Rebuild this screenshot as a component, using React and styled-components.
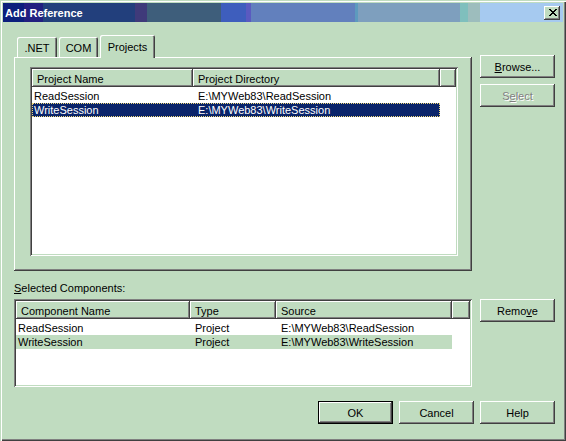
import React from "react";
import styled, { createGlobalStyle } from "styled-components";

const face = "#c0dcc0";
const raised = `inset -1px -1px #404040, inset 1px 1px #ffffff, inset -2px -2px #808080`;
const sunken = `inset 1px 1px #808080, inset -1px -1px #ffffff, inset 2px 2px #404040, inset -2px -2px ${face}`;

const GlobalStyle = createGlobalStyle`
  html, body {
    margin: 0;
    padding: 0;
    background: ${face};
  }
  body {
    font-family: "Liberation Sans", Arial, sans-serif;
    font-size: 11px;
    color: #000;
  }
`;

const projectCols = [
  { label: "Project Name", w: 161 },
  { label: "Project Directory", w: 247 },
];

const projectRows = [
  ["ReadSession", "E:\\MYWeb83\\ReadSession"],
  ["WriteSession", "E:\\MYWeb83\\WriteSession"],
];

const selectedCols = [
  { label: "Component Name", w: 174 },
  { label: "Type", w: 86 },
  { label: "Source", w: 176 },
];

const selectedRows = [
  ["ReadSession", "Project", "E:\\MYWeb83\\ReadSession"],
  ["WriteSession", "Project", "E:\\MYWeb83\\WriteSession"],
];

const CloseGlyph = () => (
  <svg width="8" height="7" viewBox="0 0 8 7" shapeRendering="crispEdges">
    <rect x="0" y="0" width="2" height="1" fill="#000" />
    <rect x="6" y="0" width="2" height="1" fill="#000" />
    <rect x="1" y="1" width="2" height="1" fill="#000" />
    <rect x="5" y="1" width="2" height="1" fill="#000" />
    <rect x="2" y="2" width="4" height="1" fill="#000" />
    <rect x="3" y="3" width="2" height="1" fill="#000" />
    <rect x="2" y="4" width="4" height="1" fill="#000" />
    <rect x="1" y="5" width="2" height="1" fill="#000" />
    <rect x="5" y="5" width="2" height="1" fill="#000" />
    <rect x="0" y="6" width="2" height="1" fill="#000" />
    <rect x="6" y="6" width="2" height="1" fill="#000" />
  </svg>
);

const ListView = ({ cols, rows, height, selected, active }) => {
  const rowWidth = cols.reduce((s, c) => s + c.w, 0);
  return (
    <List $h={height}>
      <Header>
        {cols.map((c) => (
          <HeaderCell key={c.label} $w={c.w}>
            {c.label}
          </HeaderCell>
        ))}
        <HeaderFiller />
      </Header>
      <Rows>
        {rows.map((r, i) => (
          <Row
            key={i}
            $w={rowWidth}
            $selected={i === selected}
            $active={active}
          >
            {r.map((v, j) => (
              <Cell key={j} $w={cols[j].w} $first={j === 0}>
                {v}
              </Cell>
            ))}
          </Row>
        ))}
      </Rows>
    </List>
  );
};

const App = () => {
  return (
    <>
      <GlobalStyle />
      <Window>
        <TitleBar>
          <Title>Add Reference</Title>
          <CloseButton>
            <CloseGlyph />
          </CloseButton>
        </TitleBar>

        <Body>
          <TopRow>
            <LeftCol>
              <TabStrip>
                <Tab $w={40}>.NET</Tab>
                <Tab $w={39}>COM</Tab>
                <Tab $w={55} $active>
                  Projects
                </Tab>
              </TabStrip>
              <Panel>
                <ListView
                  cols={projectCols}
                  rows={projectRows}
                  height={189}
                  selected={1}
                  active
                />
              </Panel>
            </LeftCol>
            <SideCol $top={20}>
              <Button>
                <u>B</u>rowse...
              </Button>
              <Button disabled>
                S<u>e</u>lect
              </Button>
            </SideCol>
          </TopRow>

          <Label>
            <u>S</u>elected Components:
          </Label>

          <TopRow>
            <LeftCol>
              <ListView
                cols={selectedCols}
                rows={selectedRows}
                height={88}
                selected={1}
              />
            </LeftCol>
            <SideCol $top={0}>
              <Button>
                Remo<u>v</u>e
              </Button>
            </SideCol>
          </TopRow>

          <Footer>
            <Button $default>OK</Button>
            <Button>Cancel</Button>
            <Button>Help</Button>
          </Footer>
        </Body>
      </Window>
    </>
  );
};

export default App;

const Window = styled.div`
  width: 566px;
  height: 441px;
  box-sizing: border-box;
  padding: 3px;
  background: ${face};
  box-shadow: inset 1px 1px ${face}, inset 2px 2px #ffffff,
    inset -1px -1px #404040, inset -2px -2px #808080;
`;

const TitleBar = styled.div`
  height: 19px;
  display: flex;
  align-items: center;
  justify-content: space-between;
  padding: 0 3px 0 2px;
  background: linear-gradient(
    to right,
    #0c1f7d 0 21px,
    #221f80 21px 40px,
    #223f7c 40px 132px,
    #3f3a7a 132px 144px,
    #3e5e7b 144px 218px,
    #3e5ebd 218px 243px,
    #5a5ac0 243px 248px,
    #6280bd 248px 352px,
    #5d9abe 352px 355px,
    #7e9fbe 355px 457px,
    #7fbfbd 457px 465px,
    #9dbdbd 465px 477px,
    #a6caf0 477px 100%
  );
`;

const Title = styled.span`
  color: #ffffff;
  font-weight: bold;
  font-size: 11px;
`;

const CloseButton = styled.div`
  width: 16px;
  height: 14px;
  display: flex;
  align-items: center;
  justify-content: center;
  background: ${face};
  box-shadow: ${raised};
  padding-left: 1px;
  box-sizing: border-box;
`;

const Body = styled.div`
  padding: 13px 8px 0 11px;
  display: flex;
  flex-direction: column;
`;

const TopRow = styled.div`
  display: flex;
  gap: 8px;
`;

const LeftCol = styled.div`
  width: 458px;
  display: flex;
  flex-direction: column;
`;

const SideCol = styled.div`
  width: 75px;
  display: flex;
  flex-direction: column;
  gap: 6px;
  padding-top: ${(p) => p.$top}px;
`;

const TabStrip = styled.div`
  height: 22px;
  display: flex;
  align-items: flex-end;
  gap: 2px;
  padding-left: 3px;
`;

const Tab = styled.div`
  position: relative;
  z-index: ${(p) => (p.$active ? 1 : 0)};
  width: ${(p) => p.$w}px;
  height: ${(p) => (p.$active ? 23 : 20)}px;
  margin-bottom: ${(p) => (p.$active ? -1 : 0)}px;
  box-sizing: border-box;
  display: flex;
  align-items: center;
  justify-content: center;
  padding-top: 1px;
  background: ${face};
  border-radius: 2px 2px 0 0;
  box-shadow: inset 1px 1px #ffffff, inset -1px 0 #404040, inset -2px 0 #808080;
`;

const Panel = styled.div`
  width: 458px;
  height: 214px;
  box-sizing: border-box;
  padding: 10px 14px 15px 16px;
  background: ${face};
  box-shadow: ${raised};
  display: flex;
  flex-direction: column;
`;

const List = styled.div`
  flex: none;
  width: 100%;
  height: ${(p) => p.$h}px;
  box-sizing: border-box;
  padding: 2px;
  background: #ffffff;
  box-shadow: ${sunken};
  display: flex;
  flex-direction: column;
  overflow: hidden;
`;

const Header = styled.div`
  display: flex;
  height: 18px;
  flex-shrink: 0;
`;

const HeaderCell = styled.div`
  width: ${(p) => p.$w}px;
  box-sizing: border-box;
  padding: 1px 0 0 5px;
  display: flex;
  align-items: center;
  background: ${face};
  box-shadow: ${raised};
  white-space: nowrap;
`;

const HeaderFiller = styled.div`
  flex: 1;
  background: ${face};
  box-shadow: ${raised};
`;

const Rows = styled.div`
  padding-top: 2px;
  display: flex;
  flex-direction: column;
`;

const Row = styled.div`
  width: ${(p) => p.$w}px;
  height: 14px;
  box-sizing: border-box;
  display: flex;
  align-items: center;
  background: ${(p) =>
    p.$selected ? (p.$active ? "#0a246a" : face) : "transparent"};
  color: ${(p) => (p.$selected && p.$active ? "#ffffff" : "#000000")};
  outline: ${(p) =>
    p.$selected && p.$active ? "1px dotted #f0d878" : "none"};
  outline-offset: -1px;
`;

const Cell = styled.div`
  width: ${(p) => p.$w}px;
  box-sizing: border-box;
  padding-left: ${(p) => (p.$first ? 2 : 5)}px;
  white-space: nowrap;
`;

const Label = styled.div`
  height: 14px;
  line-height: 14px;
  margin: 10px 0 4px 0;
`;

const Footer = styled.div`
  display: flex;
  justify-content: flex-end;
  gap: 6px;
  margin-top: 14px;
`;

const Button = styled.button`
  width: 75px;
  height: 23px;
  box-sizing: border-box;
  padding: 0;
  font-family: inherit;
  font-size: 11px;
  color: ${(p) => (p.disabled ? "#808080" : "#000000")};
  text-shadow: ${(p) => (p.disabled ? "1px 1px #ffffff" : "none")};
  background: ${face};
  border: ${(p) => (p.$default ? "1px solid #000000" : "none")};
  box-shadow: ${raised};
  u {
    text-decoration: underline;
  }
`;
